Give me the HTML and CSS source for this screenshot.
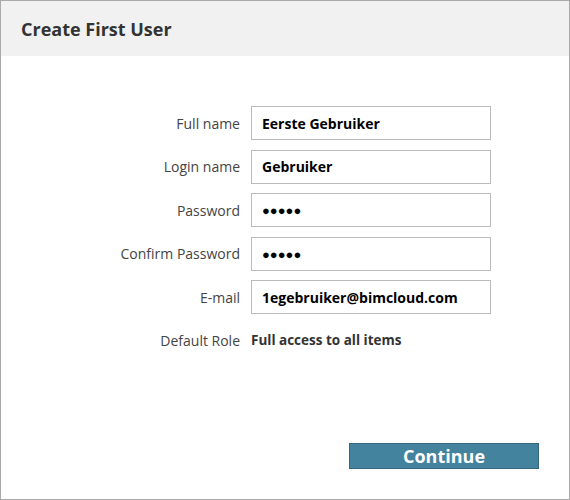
FILE: index.html
```html
<!DOCTYPE html>
<html lang="en">
<head>
    <meta charset="UTF-8">
    <meta name="viewport" content="width=device-width, initial-scale=1.0">
    <title>Create First User</title>
    <link rel="stylesheet" href="styles.css">
</head>
<body>
    <div class="dialog">
        <div class="dialog-header">
            <h2>Create First User</h2>
        </div>
        <form class="user-form" onsubmit="return false;">
            <label for="full-name">Full name</label>
            <input type="text" id="full-name" value="Eerste Gebruiker">
            <label for="login-name">Login name</label>
            <input type="text" id="login-name" value="Gebruiker">
            <label for="password">Password</label>
            <input type="text" id="password" class="dots" value="●●●●●">
            <label for="confirm-password">Confirm Password</label>
            <input type="text" id="confirm-password" class="dots" value="●●●●●">
            <label for="email">E-mail</label>
            <input type="text" id="email" value="1egebruiker@bimcloud.com">
            <span class="role-label">Default Role</span>
            <span class="role-value">Full access to all items</span>
        </form>
        <div class="dialog-footer">
            <button type="button" class="continue">Continue</button>
        </div>
    </div>
</body>
</html>
```

FILE: styles.css
```css
body {
    margin: 0;
    font-family: "Open Sans", "Liberation Sans", sans-serif;
    background: #fff;
}
.dialog {
    width: 570px;
    height: 500px;
    box-sizing: border-box;
    border: 1px solid #aaa;
    display: flex;
    flex-direction: column;
}
.dialog-header {
    height: 55px;
    background-color: #f1f1f1;
    display: flex;
    align-items: center;
    padding-left: 20px;
}
.dialog-header h2 {
    margin: 0;
    font-size: 18px;
    font-weight: 700;
    color: #333;
}
.user-form {
    display: grid;
    grid-template-columns: 239px 240px;
    column-gap: 11px;
    row-gap: 9.5px;
    padding-top: 50px;
    align-items: center;
}
.user-form label,
.role-label {
    text-align: right;
    font-size: 14px;
    color: #444;
}
.user-form input {
    height: 34px;
    box-sizing: border-box;
    border: 1px solid #bbb;
    padding: 0 10px;
    font-family: inherit;
    font-size: 14px;
    font-weight: 700;
    color: #000;
    outline: none;
}
.user-form input.dots {
    font-size: 13px;
}
.role-value {
    height: 34px;
    line-height: 33px;
    font-size: 13.5px;
    font-weight: 700;
    color: #333;
}
.dialog-footer {
    margin-top: auto;
    display: flex;
    justify-content: flex-end;
    padding: 0 30px 30px 0;
}
.continue {
    width: 190px;
    height: 26px;
    border: 1px solid #35687d;
    background-color: #44839d;
    color: #fff;
    font-family: inherit;
    font-size: 18px;
    font-weight: 700;
    padding: 0 0 1px;
    line-height: 1;
    cursor: pointer;
}
```
